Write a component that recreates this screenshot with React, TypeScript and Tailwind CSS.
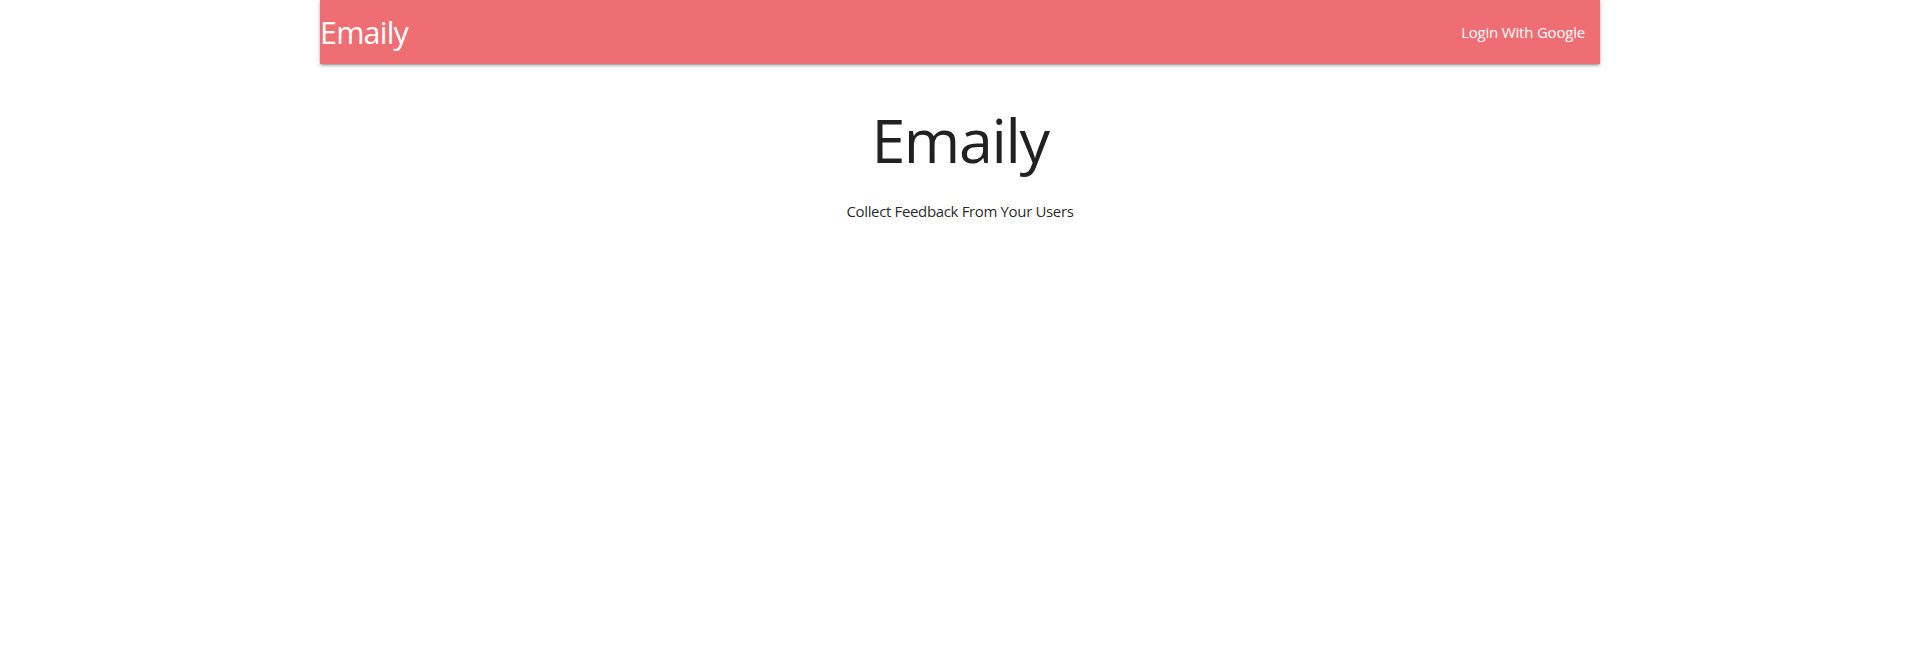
export default function App() {
  return (
    <div className="min-h-[656px] bg-white font-['Open_Sans',sans-serif] text-[15px] text-[rgba(0,0,0,0.87)]">
      <div className="mx-auto w-[1280px]">
        {/* Top bar */}
        <nav className="flex h-16 items-center justify-between bg-[#ee6e73] text-white shadow-[0_2px_2px_0_rgba(0,0,0,0.14),0_3px_1px_-2px_rgba(0,0,0,0.12),0_1px_5px_0_rgba(0,0,0,0.2)]">
          <a className="text-[30.5px] leading-[64px] tracking-[-0.8px]">Emaily</a>
          <ul className="flex">
            <li>
              <a className="px-[15px] text-[15px] leading-[64px] tracking-[-0.2px]">Login With Google</a>
            </li>
          </ul>
        </nav>

        {/* Landing */}
        <div className="text-center">
          <h1 className="mt-[42px] mb-[27px] text-[61px] leading-[110%] font-normal tracking-[-1.4px]">Emaily</h1>
          <p className="tracking-[-0.35px]">Collect Feedback From Your Users</p>
        </div>
      </div>
    </div>
  );
}
